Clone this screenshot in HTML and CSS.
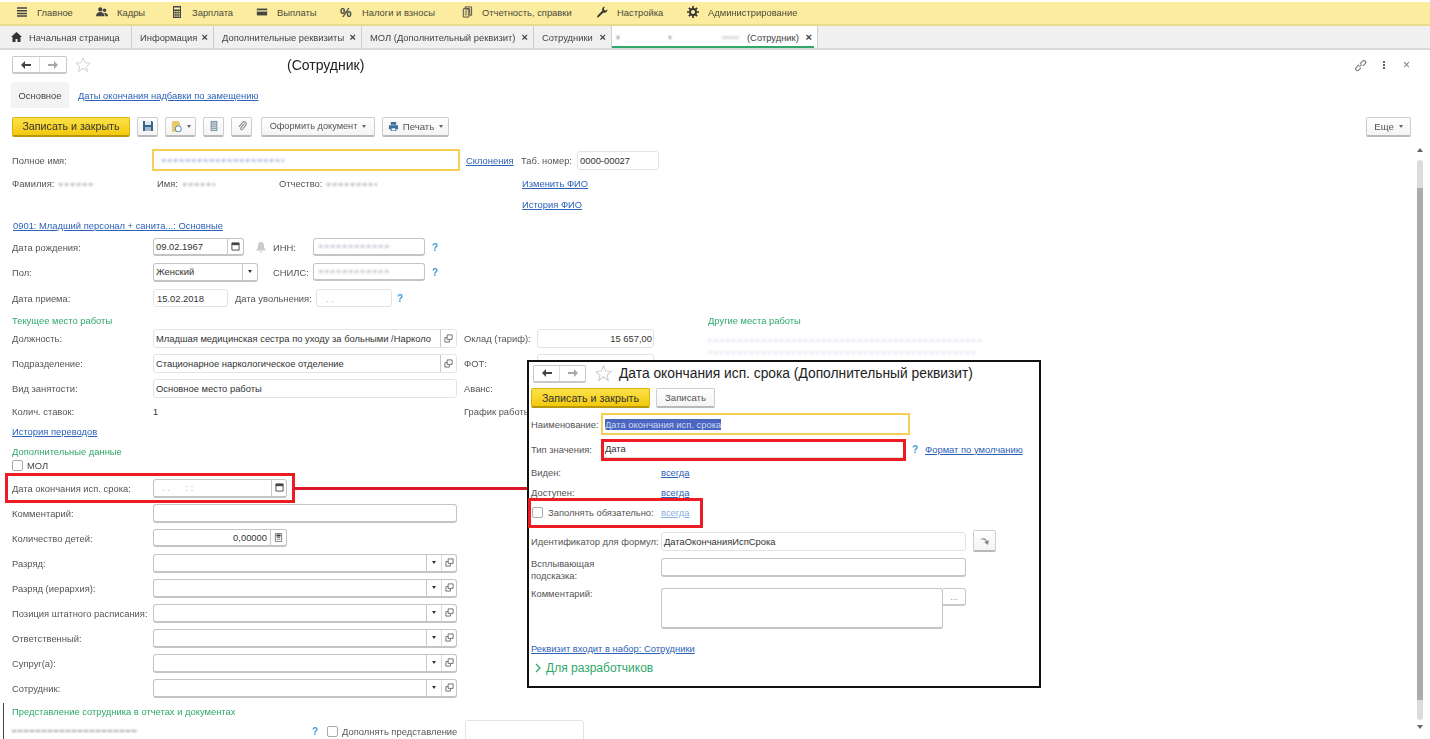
FILE: index.html
```html
<!DOCTYPE html>
<html lang="ru">
<head>
<meta charset="utf-8">
<title>Сотрудник</title>
<link rel="stylesheet" href="styles.css">
</head>
<body>
<div class="app">
  <nav class="menu">
    <a class="mi w-glav"><svg class="ic" viewBox="0 0 12 12"><path d="M1 2h10M1 4.700h10M1 7.400h10M1 10h10" stroke="#444" stroke-width="1.500"/></svg><span>Главное</span></a>
    <a class="mi w-kadr"><svg class="ic" viewBox="0 0 14 12"><circle cx="5" cy="3" r="2.500" fill="#444"/><circle cx="10" cy="4" r="2" fill="#444"/><path d="M0 11c0-3 2-5 5-5s5 2 5 5zM9 7c3 0 5 1 5 4h-3c0-2-1-3-2-4z" fill="#444"/></svg><span>Кадры</span></a>
    <a class="mi w-zarp"><svg class="ic" viewBox="0 0 12 12"><path d="M2 0h8v12H2z" fill="#444"/><path d="M3 1.500h6v2H3zM3 5h1.500v1.300H3zM5.300 5h1.500v1.300H5.300zM7.500 5H9v1.300H7.500zM3 7.300h1.500v1.300H3zM5.300 7.300h1.500v1.300H5.300zM7.500 7.300H9v1.300H7.500zM3 9.500h1.500v1.300H3zM5.300 9.500h1.500v1.300H5.300zM7.500 9.500H9v1.300H7.500z" fill="#fbec9f"/></svg><span>Зарплата</span></a>
    <a class="mi w-vypl"><svg class="ic" viewBox="0 0 14 12"><path d="M1 2h12v8H1z" fill="#444"/><path d="M1 4h12v1.500H1z" fill="#fbec9f"/></svg><span>Выплаты</span></a>
    <a class="mi w-nal"><span class="pct">%</span><span>Налоги и взносы</span></a>
    <a class="mi w-otch"><svg class="ic" viewBox="0 0 12 13"><path d="M4 1h7v9H9V3H4zM2 3h6v9H2z" fill="none" stroke="#444"/><path d="M3.500 5.500h3M3.500 7.500h3M3.500 9.500h3" stroke="#444" stroke-width=".8"/></svg><span>Отчетность, справки</span></a>
    <a class="mi w-nast"><svg class="ic" viewBox="0 0 13 13"><path d="M1 12l1-2 5-5c-1-2 0-4 3-4.500L8.500 2.500l.5 2 2 .5 1.500-1.500C12.500 6.500 10 8 8 7l-5 5-2 .5z" fill="#333"/></svg><span>Настройка</span></a>
    <a class="mi w-adm"><svg class="ic" viewBox="0 0 13 13"><circle cx="6.500" cy="6.500" r="3.300" fill="none" stroke="#333" stroke-width="2"/><path d="M6.500 0v2.500M6.500 10.500V13M0 6.500h2.500M10.500 6.500H13M2 2l1.700 1.700M9.300 9.300L11 11M2 11l1.700-1.700M9.300 3.700L11 2" stroke="#333" stroke-width="1.800"/></svg><span>Администрирование</span></a>
  </nav>

  <div class="tabs">
    <div class="tab t-home"><svg class="ic-home" viewBox="0 0 11 10"><path d="M5.500 0L11 5H9.500v5H6.500V7h-2v3h-3V5H0z" fill="#333"/></svg>Начальная страница</div>
    <div class="tab t-info">Информация<b>×</b></div>
    <div class="tab t-dop">Дополнительные реквизиты<b>×</b></div>
    <div class="tab t-mol">МОЛ (Дополнительный реквизит)<b>×</b></div>
    <div class="tab t-sotr">Сотрудники<b>×</b></div>
    <div class="tab t-act"><i class="redact r-tab"></i>(Сотрудник)<b>×</b></div>
  </div>

  <main class="page">
    <header class="head">
      <div class="nav"><span class="nb"><svg viewBox="0 0 10 8" class="ar"><path d="M0 4l4-4v3h6v2H4v3z" fill="#444"/></svg></span><span class="nb"><svg viewBox="0 0 10 8" class="ar"><path d="M10 4L6 0v3H0v2h6v3z" fill="#a8a8a8"/></svg></span></div>
      <svg class="star" viewBox="0 0 16 16"><path d="M8 1l2.100 4.600 5 .6-3.700 3.400 1 5L8 11.100 3.600 14.600l1-5L.9 6.200l5-.6z" fill="none" stroke="#cfcfcf"/></svg>
      <h1 class="title">(Сотрудник)</h1>
      <div class="head-ic">
        <svg class="hi" viewBox="0 0 12 12"><path d="M5 7l2-2M4.500 5.500L2 8a1.600 1.600 0 0 0 2.300 2.300L6.500 8M5.500 4.500L8 2a1.600 1.600 0 0 1 2.300 2.300L8 6.500" fill="none" stroke="#777"/></svg>
        <span class="dots"></span>
        <span class="hx">×</span>
      </div>
    </header>

    <div class="subtabs"><span class="st-on">Основное</span><a class="lnk">Даты окончания надбавки по замещению</a></div>

    <div class="cmd">
      <button class="btn yellow b-save">Записать и закрыть</button>
      <button class="btn ico ml6"><svg viewBox="0 0 12 12" class="bi"><path d="M1 1h9l1 1v9H1z" fill="#33648f"/><path d="M3 1h6v4H3z" fill="#dfe8ef"/><path d="M3 7h6v4H3z" fill="#9fb8cc"/></svg></button>
      <button class="btn ico2 ml6"><svg viewBox="0 0 12 14" class="bi2"><path d="M1 1h7l2 2v10H1z" fill="#e9c96a"/><circle cx="8" cy="9.500" r="3.300" fill="#fff" stroke="#3b7fb5"/></svg><em class="caret"></em></button>
      <button class="btn ico ml6"><svg viewBox="0 0 10 14" class="bi"><path d="M1 1h8v12H1z" fill="#8aa0b0"/><path d="M2.500 3.500h5M2.500 6h5M2.500 8.500h5M2.500 11h5" stroke="#e6edf2"/></svg></button>
      <button class="btn ico ml6"><svg viewBox="0 0 12 14" class="bi"><path d="M9 4L4.500 9.500a1.300 1.300 0 0 0 2 1.600L10.500 6a2.500 2.500 0 0 0-4-3L2.500 8" fill="none" stroke="#8a8a8a" stroke-width="1.200"/></svg></button>
      <button class="btn b-doc">Оформить документ<em class="caret"></em></button>
      <button class="btn ml6 b-print"><svg viewBox="0 0 12 12" class="pr"><path d="M3 1h6v3H3zM1 4.500h10v4.500H9v2H3V9H1z" fill="#3d6f99"/><path d="M4 8h4v2.300H4z" fill="#fff"/></svg>Печать<em class="caret"></em></button>
      <button class="btn b-more">Еще<em class="caret"></em></button>
    </div>

    <form class="form">
      <div class="row first">
        <label class="lab">Полное имя:</label>
        <div class="fld focus f-full"><i class="redact r-full"></i></div>
        <a class="lnk l-skl">Склонения</a>
        <span class="plain tabno">Таб. номер:</span>
        <div class="fld soft f-tab">0000-00027</div>
      </div>
      <div class="row s23 names">
        <span class="plain w-fam">Фамилия:<i class="redact r-n1"></i></span>
        <span class="plain w-im">Имя:<i class="redact r-n2"></i></span>
        <span class="plain w-ot">Отчество:<i class="redact r-n3"></i></span>
        <a class="lnk">Изменить ФИО</a>
      </div>
      <div class="row s21"><a class="lnk hist">История ФИО</a></div>
      <div class="row s21"><a class="lnk l0901">0901: Младший персонал + санита...: Основные</a></div>

      <div class="row s22">
        <label class="lab">Дата рождения:</label>
        <div class="fld f-dob">09.02.1967<span class="sq"><svg class="cal" viewBox="0 0 10 10"><path d="M1 1h8v8H1z" fill="none" stroke="#444"/><path d="M1 1h8v2.500H1z" fill="#444"/></svg></span></div>
        <svg class="bell" viewBox="0 0 10 11"><path d="M5 0c2.500 0 3 2 3 4s1 3 2 4.500H0C1 7 2 6 2 4s.5-4 3-4zM3.500 9.500h3L5 11z" fill="#cbcbcb"/></svg>
        <span class="plain ml7 w-inn">ИНН:</span>
        <div class="fld f-inn"><i class="redact r-inn"></i></div>
        <span class="q">?</span>
      </div>
      <div class="row s25">
        <label class="lab">Пол:</label>
        <div class="fld f-sex">Женский<span class="sq dd"><em class="caret dark"></em></span></div>
        <span class="plain ml15 w-inn">СНИЛС:</span>
        <div class="fld f-inn"><i class="redact r-inn"></i></div>
        <span class="q">?</span>
      </div>
      <div class="row s26">
        <label class="lab">Дата приема:</label>
        <div class="fld soft f-hire">15.02.2018</div>
        <span class="plain ml7 w-uv">Дата увольнения:</span>
        <div class="fld soft f-fire"><span class="pale">. .</span></div>
        <span class="q q-fire">?</span>
      </div>
      <div class="row s22 sect"><span class="grn w-cur">Текущее место работы</span><span class="grn">Другие места работы</span></div>
      <div class="row s18 over">
        <label class="lab">Должность:</label>
        <div class="fld soft f-wide">Младшая медицинская сестра по уходу за больными /Нарколо<span class="sq open"><svg class="op" viewBox="0 0 10 10"><path d="M3.500 1h5.500v5H3.500zM1 4h2.500M1 4v5h5V6.500" fill="none" stroke="#666"/></svg></span></div>
        <span class="plain ml7 w-okl">Оклад (тариф):</span>
        <div class="fld soft f-okl">15 657,00</div>
        <div class="oth"><i class="redact r-oth1"></i><i class="redact r-oth2"></i></div>
      </div>
      <div class="row s25 over">
        <label class="lab">Подразделение:</label>
        <div class="fld soft f-wide">Стационарное наркологическое отделение<span class="sq open"><svg class="op" viewBox="0 0 10 10"><path d="M3.500 1h5.500v5H3.500zM1 4h2.500M1 4v5h5V6.500" fill="none" stroke="#666"/></svg></span></div>
        <span class="plain ml7 w-okl">ФОТ:</span>
        <div class="fld soft f-okl"></div>
      </div>
      <div class="row s25">
        <label class="lab">Вид занятости:</label>
        <div class="fld soft f-wide">Основное место работы</div>
        <span class="plain avans">Аванс:</span>
      </div>
      <div class="row s23">
        <label class="lab">Колич. ставок:</label>
        <span class="val">1</span>
        <span class="plain">График работы:</span>
      </div>
      <div class="row s20"><a class="lnk">История переводов</a></div>
      <div class="row s20"><span class="grn">Дополнительные данные</span></div>
      <div class="row s14"><span class="chk"></span><span class="mol">МОЛ</span></div>
      <div class="row s23">
        <label class="lab">Дата окончания исп. срока:</label>
        <div class="fld f-end"><span class="pale">. . &nbsp; &nbsp; &nbsp;: :</span><span class="sq"><svg class="cal" viewBox="0 0 10 10"><path d="M1 1h8v8H1z" fill="none" stroke="#444"/><path d="M1 1h8v2.500H1z" fill="#444"/></svg></span></div>
      </div>
      <div class="row s25"><label class="lab">Комментарий:</label><div class="fld f-wide2"></div></div>
      <div class="row s25"><label class="lab">Количество детей:</label><div class="fld f-kids">0,00000<span class="sq"><svg class="cal" viewBox="0 0 10 10"><path d="M1.500 .5h7v9h-7z" fill="none" stroke="#777"/><path d="M3 2h4v1.500H3zM3 5h4M3 7h4" stroke="#777"/></svg></span></div></div>
      <div class="row s25"><label class="lab">Разряд:</label><div class="fld f-wide2"><span class="sq dd2"><em class="caret dark"></em></span><span class="sq dd3"><svg class="op" viewBox="0 0 10 10"><path d="M3.500 1h5.500v5H3.500zM1 4h2.500M1 4v5h5V6.500" fill="none" stroke="#666"/></svg></span></div></div>
      <div class="row s25"><label class="lab">Разряд (иерархия):</label><div class="fld f-wide2"><span class="sq dd2"><em class="caret dark"></em></span><span class="sq dd3"><svg class="op" viewBox="0 0 10 10"><path d="M3.500 1h5.500v5H3.500zM1 4h2.500M1 4v5h5V6.500" fill="none" stroke="#666"/></svg></span></div></div>
      <div class="row s25"><label class="lab">Позиция штатного расписания:</label><div class="fld f-wide2"><span class="sq dd2"><em class="caret dark"></em></span><span class="sq dd3"><svg class="op" viewBox="0 0 10 10"><path d="M3.500 1h5.500v5H3.500zM1 4h2.500M1 4v5h5V6.500" fill="none" stroke="#666"/></svg></span></div></div>
      <div class="row s25"><label class="lab">Ответственный:</label><div class="fld f-wide2"><span class="sq dd2"><em class="caret dark"></em></span><span class="sq dd3"><svg class="op" viewBox="0 0 10 10"><path d="M3.500 1h5.500v5H3.500zM1 4h2.500M1 4v5h5V6.500" fill="none" stroke="#666"/></svg></span></div></div>
      <div class="row s25"><label class="lab">Супруг(а):</label><div class="fld f-wide2"><span class="sq dd2"><em class="caret dark"></em></span><span class="sq dd3"><svg class="op" viewBox="0 0 10 10"><path d="M3.500 1h5.500v5H3.500zM1 4h2.500M1 4v5h5V6.500" fill="none" stroke="#666"/></svg></span></div></div>
      <div class="row s25"><label class="lab">Сотрудник:</label><div class="fld f-wide2"><span class="sq dd2"><em class="caret dark"></em></span><span class="sq dd3"><svg class="op" viewBox="0 0 10 10"><path d="M3.500 1h5.500v5H3.500zM1 4h2.500M1 4v5h5V6.500" fill="none" stroke="#666"/></svg></span></div></div>
      <div class="row s23"><span class="grn">Представление сотрудника в отчетах и документах</span></div>
      <div class="row s20">
        <i class="redact r-last"></i>
        <span class="q q-last">?</span><span class="chk c-last"></span><span class="plain">Дополнять представление</span>
        <div class="fld soft f-last"></div>
      </div>
    </form>
  </main>

  <div class="scroll"><span class="sa sa-up"></span><div class="track"><div class="thumb"></div></div><span class="sa sa-down"></span></div>
  <div class="edge"></div>

  <div class="red r-left"></div>
  <div class="red r-line"></div>

  <section class="dlg">
    <div class="d-head">
      <div class="nav"><span class="nb"><svg viewBox="0 0 10 8" class="ar"><path d="M0 4l4-4v3h6v2H4v3z" fill="#444"/></svg></span><span class="nb"><svg viewBox="0 0 10 8" class="ar"><path d="M10 4L6 0v3H0v2h6v3z" fill="#a8a8a8"/></svg></span></div>
      <svg class="star d-star" viewBox="0 0 16 16"><path d="M8 1l2.100 4.600 5 .6-3.700 3.400 1 5L8 11.100 3.600 14.600l1-5L.9 6.200l5-.6z" fill="none" stroke="#cfcfcf"/></svg>
      <h2 class="d-title">Дата окончания исп. срока (Дополнительный реквизит)</h2>
    </div>
    <div class="d-cmd"><button class="btn yellow d-save">Записать и закрыть</button><button class="btn d-wr">Записать</button></div>
    <div class="d-row d-r1"><label class="d-lab">Наименование:</label><div class="fld focus d-f1"><span class="sel">Дата окончания исп. срока</span></div></div>
    <div class="d-row d-r2"><label class="d-lab">Тип значения:</label><div class="fld d-f2">Дата</div><span class="q d-q">?</span><a class="lnk d-fmt">Формат по умолчанию</a></div>
    <div class="d-row d-r3"><label class="d-lab2">Виден:</label><a class="lnk">всегда</a></div>
    <div class="d-row d-r4"><label class="d-lab2">Доступен:</label><a class="lnk">всегда</a></div>
    <div class="d-row d-r4"><span class="chk d-chk"></span><label class="d-lab3">Заполнять обязательно:</label><a class="lnk faint">всегда</a></div>
    <div class="d-row d-r5"><label class="d-lab2">Идентификатор для формул:</label><div class="fld soft d-f3">ДатаОкончанияИспСрока</div><button class="btn d-go"><svg viewBox="0 0 10 8" class="ar2"><path d="M0 3c3-3 6-2 7 1l2-1-1 5-4-3 2-.5C5 2.500 3 2 0 3z" fill="#888"/></svg></button></div>
    <div class="d-row d-r6"><label class="d-lab2 two">Всплывающая подсказка:</label><div class="fld d-f3"></div></div>
    <div class="d-row d-r7"><label class="d-lab2">Комментарий:</label><div class="fld d-ta"></div><span class="d-more">...</span></div>
    <a class="lnk d-link">Реквизит входит в набор: Сотрудники</a>
    <div class="d-dev"><svg class="chev" viewBox="0 0 6 10"><path d="M1 1l4 4-4 4" fill="none" stroke="#2fa86a" stroke-width="1.300"/></svg>Для разработчиков</div>
    <div class="red r-type"></div>
    <div class="red r-req"></div>
  </section>
</div>
</body>
</html>
```
FILE: styles.css
```css
* { box-sizing: border-box; }
html, body { margin: 0; padding: 0; height: 100%; overflow: hidden; background: #fff; }
body { font-family: "Liberation Sans", Arial, sans-serif; font-size: 9.4px; color: #555; }
.app { position: relative; width: 1430px; height: 739px; overflow: hidden; padding-top: 2px; filter: blur(.45px); }

.menu { height: 24px; padding-bottom: 2px; background: #fbec9f; border-bottom: 2px solid #eadb8c; display: flex; align-items: center; color: #4b4b3a; }
.mi { display: flex; align-items: center; flex: none; }
.ic { width: 12px; height: 12px; flex: none; margin-right: 9px; }
.pct { font-size: 13px; font-weight: bold; margin-right: 9px; color: #444; width: 13px; }
.w-glav { margin-left: 16px; width: 80px; }
.w-kadr { width: 75px; }
.w-zarp { width: 85px; }
.w-vypl { width: 84px; }
.w-nal { width: 121px; }
.w-otch { width: 135px; }
.w-nast { width: 91px; }
.w-adm { width: 140px; }

.tabs { height: 24px; background: #f0f0f0; border-bottom: 2px solid #d9d9d9; display: flex; color: #444; }
.tab { height: 22px; display: flex; align-items: center; padding-left: 8px; border-right: 1px solid #cfcfcf; flex: none; position: relative; white-space: nowrap; }
.tab b { position: absolute; right: 5px; font-size: 11px; font-weight: bold; color: #444; }
.ic-home { width: 11px; height: 10px; margin-right: 7px; }
.t-home { width: 132px; padding-left: 11px; }
.t-info { width: 82px; }
.t-dop { width: 148px; }
.t-mol { width: 172px; }
.t-sotr { width: 78px; }
.t-act { width: 206px; background: #fff; padding-left: 5px; }
.t-act::after { content: ""; position: absolute; left: 0; right: 3px; bottom: 0; height: 2px; background: #2fa86a; }

.head { height: 30px; display: flex; align-items: center; padding: 0 20px 0 12px; }
.nav { display: flex; width: 55px; height: 18px; border: 1px solid #c8c8c8; border-bottom-width: 2px; border-radius: 2px; background: #fff; flex: none; }
.nb { flex: 1; display: flex; align-items: center; justify-content: center; }
.nb + .nb { border-left: 1px solid #dedede; }
.ar { width: 10px; height: 8px; }
.star { width: 16px; height: 16px; margin-left: 8px; flex: none; }
.title { margin: 0 0 0 196px; font-size: 14px; font-weight: normal; color: #222; }
.head-ic { margin-left: auto; display: flex; align-items: center; }
.hi { width: 13px; height: 13px; }
.dots { width: 2px; height: 8px; margin: 0 0 0 16px; background: repeating-linear-gradient(#666 0 2px, transparent 2px 3px); }
.hx { margin-left: 18px; font-size: 12px; color: #777; }

.subtabs { height: 26px; margin-top: 2px; display: flex; align-items: center; padding-left: 11px; }
.st-on { width: 58px; height: 26px; display: flex; align-items: center; justify-content: center; background: #f3f3f3; border-radius: 2px; color: #444; white-space: nowrap; margin-right: 9px; }
.lnk { color: #2d62b8; text-decoration: underline; white-space: nowrap; }

.cmd { height: 21px; margin-top: 8px; padding: 0 19px 0 12px; display: flex; align-items: center; }
.btn { height: 20px; border: 1px solid #cdcdcd; border-bottom: 2px solid #b9b9b9; border-radius: 2px; background: linear-gradient(#fff, #f4f4f4); font: 9.6px "Liberation Sans", Arial, sans-serif; color: #555; padding: 0; display: inline-flex; align-items: center; justify-content: center; flex: none; white-space: nowrap; }
.yellow { background: linear-gradient(#fbe24a, #f3c90e); border-color: #d8b40d #d8b40d #b8980a; color: #333; font-size: 10.7px; }
.b-save { width: 118px; }
.ml6 { margin-left: 7px; }
.ico { width: 21px; }
.ico2 { width: 31px; }
.bi { width: 12px; height: 12px; }
.bi2 { width: 11px; height: 13px; }
.caret { display: inline-block; width: 0; height: 0; border: 2px solid transparent; border-top: 3px solid #666; border-bottom: 0; margin-left: 5px; }
.caret.dark { border-top-color: #333; margin: 0; }
.b-doc { width: 114px; margin-left: 9px; font-size: 9.2px; }
.b-print { width: 67px; }
.pr { width: 11px; height: 11px; margin-right: 4px; }
.b-more { width: 45px; margin-left: auto; }

.form { display: flex; flex-direction: column; padding-left: 12px; }
.row { height: 14px; display: flex; align-items: center; flex: none; position: relative; }
.first { margin-top: 16px; }
.s14 { margin-top: 0; }
.s18 { margin-top: 4px; }
.s20 { margin-top: 6px; }
.s21 { margin-top: 7px; }
.s22 { margin-top: 8px; }
.s23 { margin-top: 9px; }
.s25 { margin-top: 11px; }
.s26 { margin-top: 12px; }

.lab { width: 141px; flex: none; white-space: nowrap; }
.plain { white-space: nowrap; flex: none; }
.grn { color: #2fa86a; white-space: nowrap; flex: none; }
.fld { height: 20px; flex: none; background: #fff; border: 1px solid #c4c4c4; border-bottom-width: 2px; border-radius: 3px; display: flex; align-items: center; padding-left: 2px; color: #333; position: relative; white-space: nowrap; }
.fld.soft { border: 1px solid #e3e3e3; }
.fld.focus { border: 2px solid #f7cf55; border-radius: 0; height: 22px; }
.sq { position: absolute; right: 0; top: 0; bottom: 0; width: 16px; border-left: 1px solid #c8c8c8; display: flex; align-items: center; justify-content: center; }
.cal { width: 9px; height: 9px; }
.op { width: 9px; height: 9px; }
.f-full { width: 308px; margin-left: -1px; }
.ml7 { margin-left: 7px; }
.ml15 { margin-left: 15px; }
.l-skl { width: 55px; margin-left: 6px; flex: none; }
.tabno { width: 56px; }
.f-tab { width: 82px; height: 19px; }
.names .w-fam { width: 145px; }
.names .w-im { width: 122px; }
.names .w-ot { width: 243px; }
.hist { margin-left: 510px; }
.l0901 { margin-left: 1px; }
.f-dob { width: 91px; height: 18px; }
.bell { width: 10px; height: 11px; margin-left: 12px; flex: none; }
.w-inn { width: 40px; }
.f-inn { width: 112px; height: 18px; }
.q { color: #3d9ad6; font-weight: bold; font-size: 10px; margin-left: 7px; flex: none; }
.q-fire { margin-left: 5px; }
.f-sex { width: 105px; height: 19px; }
.f-sex .sq { width: 15px; }
.f-hire { width: 75px; height: 18px; padding-left: 3px; }
.w-uv { width: 81px; }
.f-fire { width: 76px; height: 18px; padding-left: 9px; }
.pale { color: #b5b5b5; }
.w-cur { width: 696px; }
.f-wide { width: 304px; height: 19px; }
.w-okl { width: 73px; }
.f-okl { width: 117px; height: 19px; justify-content: flex-end; padding-right: 1px; }
.avans { margin-left: 7px; }
.val { color: #333; width: 311px; flex: none; }
.chk { width: 11px; height: 11px; border: 1px solid #aaa; border-radius: 2px; background: #fff; flex: none; display: block; }
.mol { margin-left: 4px; color: #444; }
.f-end { width: 134px; height: 19px; padding-left: 8px; }
.f-end .sq { width: 15px; }
.f-wide2 { width: 304px; height: 19px; }
.f-kids { width: 134px; height: 18px; justify-content: flex-end; padding-right: 19px; }
.sq.dd2 { right: 15px; width: 15px; }
.sq.dd3 { width: 15px; border-left: 1px solid #dedede; }
.q-last { margin-left: 0; }
.c-last { margin: 0 4px 0 9px; }
.f-last { width: 119px; height: 22px; margin-left: 8px; }

.redact { display: block; flex: none; filter: blur(.8px); background: repeating-linear-gradient(90deg, #b9c3e2 0 3px, #e7eaf5 3px 5px, #fff 5px 6px); }
.r-full { width: 122px; height: 3px; margin-left: 6px; }
.r-tab { width: 124px; height: 3px; background: linear-gradient(90deg, #777 0 2px, #fff 2px 52px, #888 52px 54px, #fff 54px 105px, #ddd 105px 122px, #fff 122px); margin-right: 6px; }
.names .redact { display: inline-block; height: 3px; margin-left: 5px; vertical-align: middle; background: repeating-linear-gradient(90deg, #bdbdbd 0 3px, #f0f0f0 3px 5px, #fff 5px 6px); }
.r-n1 { width: 36px; }
.r-n2 { width: 32px; }
.r-n3 { width: 50px; }
.r-inn { width: 72px; height: 3px; margin-left: 3px; background: repeating-linear-gradient(90deg, #c9c9d4 0 3px, #efeff4 3px 5px, #fff 5px 6px); }
.oth { display: flex; flex-direction: column; gap: 9px; margin: 16px 0 0 54px; flex: none; opacity: .35; }
.r-oth1 { width: 275px; height: 3px; }
.r-oth2 { width: 270px; height: 3px; }
.r-last { width: 125px; margin-right: 175px; height: 2px; background: repeating-linear-gradient(90deg, #aaa 0 4px, #e4e4e4 4px 6px); }

.scroll { position: absolute; left: 1417px; top: 148px; width: 6px; height: 584px; display: flex; flex-direction: column; align-items: center; }
.sa { flex: none; width: 0; height: 0; border: 3px solid transparent; }
.sa-up { border-bottom: 4px solid #666; border-top: 0; }
.sa-down { border-top: 4px solid #666; border-bottom: 0; margin-top: 5px; }
.track { width: 6px; height: 560px; flex: none; margin-top: 8px; background: #dcdcdc; border-radius: 3px; padding-top: 28px; }
.thumb { height: 512px; background: #ababab; }
.edge { position: absolute; left: 3px; top: 703px; width: 1px; height: 36px; background: #444; }

.red { position: absolute; border: 3px solid #ed1c24; pointer-events: none; }
.r-left { left: 5px; top: 473px; width: 290px; height: 30px; }
.r-line { left: 294px; top: 487px; width: 234px; height: 3px; border: 0; background: #d8182a; }

.dlg { position: absolute; left: 527px; top: 360px; width: 514px; height: 328px; background: #fff; border: 2px solid #111; padding: 2px 0 0 2px; display: flex; flex-direction: column; }
.d-head { display: flex; align-items: center; height: 19px; flex: none; padding-left: 2px; }
.d-head .nav { width: 53px; }
.d-star { margin-left: 9px; width: 17px; height: 17px; }
.d-title { margin: 0 0 0 7px; font-size: 13.8px; font-weight: normal; color: #222; white-space: nowrap; }
.d-cmd { display: flex; margin-top: 5px; height: 20px; flex: none; }
.d-save { width: 119px; }
.d-wr { width: 59px; margin-left: 6px; }
.d-row { display: flex; align-items: center; height: 14px; flex: none; white-space: nowrap; color: #555; }
.d-r1 { margin-top: 9px; }
.d-r2 { margin-top: 11px; }
.d-r3 { margin-top: 9px; }
.d-r4 { margin-top: 6px; }
.d-r5 { margin-top: 15px; }
.d-r6 { margin-top: 12px; }
.d-r7 { margin-top: 14px; align-items: flex-start; height: 41px; }
.d-lab { width: 70px; flex: none; }
.d-lab2 { width: 130px; flex: none; }
.two { white-space: normal; line-height: 12px; padding-right: 50px; margin-top: 6px; }
.d-lab3 { width: 113px; flex: none; margin-left: 5px; }
.d-chk { margin-left: 1px; }
.faint { color: #8ab0de; }
.d-f1 { width: 309px; height: 22px; }
.sel { background: #4a66c0; color: #cdd6f0; }
.d-f2 { width: 304px; height: 19px; border-color: #ddd; padding-left: 3px; }
.d-fmt { margin-left: 7px; }
.d-f3 { width: 305px; height: 19px; }
.d-go { width: 23px; height: 22px; margin-left: 7px; }
.ar2 { width: 10px; height: 8px; }
.d-ta { width: 282px; height: 41px; }
.d-more { width: 23px; height: 18px; border: 1px solid #c8c8c8; border-left: 0; border-bottom-width: 2px; border-radius: 0 3px 3px 0; display: flex; align-items: center; justify-content: center; color: #999; font-size: 9px; flex: none; }
.d-link { margin-top: 14px; align-self: flex-start; }
.d-dev { margin-top: 7px; font-size: 12px; color: #2fa86a; display: flex; align-items: center; white-space: nowrap; padding-left: 4px; }
.chev { width: 6px; height: 10px; margin-right: 5px; }
.r-type { left: 72px; top: 77px; width: 305px; height: 22px; }
.r-req { left: -1px; top: 136px; width: 175px; height: 30px; }
```
